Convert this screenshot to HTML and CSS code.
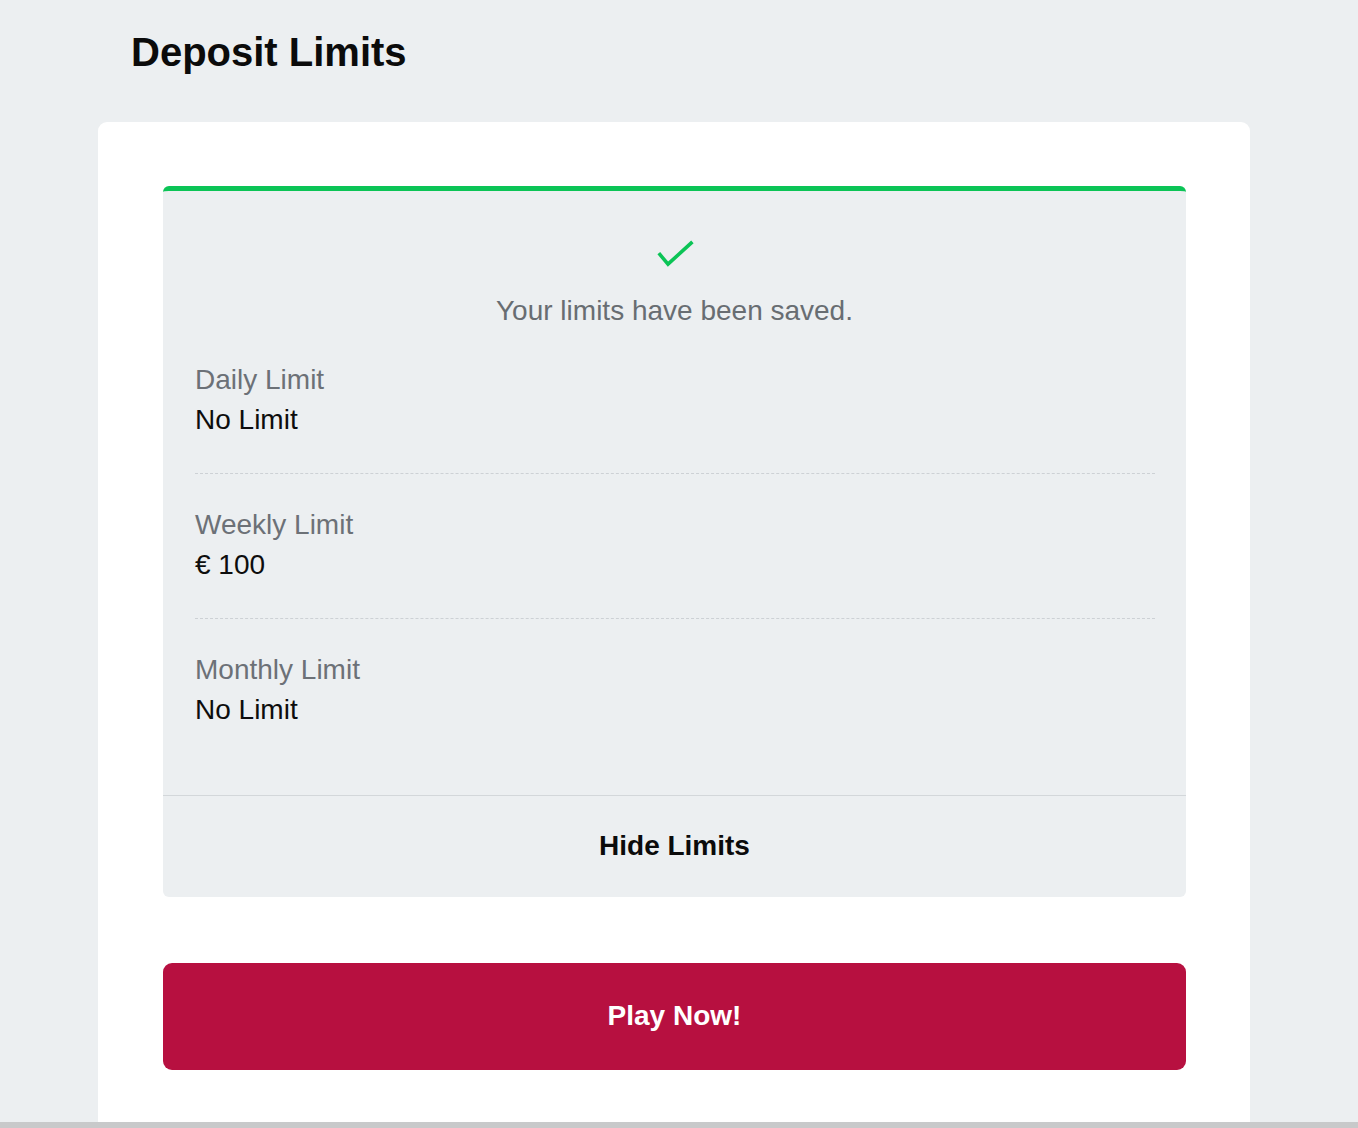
FILE: index.html
```html
<!DOCTYPE html>
<html lang="en">
<head>
<meta charset="utf-8">
<title>Deposit Limits</title>
<link rel="stylesheet" href="styles.css">
</head>
<body>
<div class="page">
  <h1 class="title">Deposit Limits</h1>
  <div class="card">
    <div class="panel">
      <div class="status">
        <svg class="check" width="37" height="28" viewBox="0 0 37 28" aria-hidden="true">
          <polyline points="1.8,13.2 11,24.2 35.4,1.8" fill="none" stroke="#0bc456" stroke-width="3.6" stroke-linecap="butt" stroke-linejoin="miter"/>
        </svg>
        <p class="status-text">Your limits have been saved.</p>
      </div>
      <div class="rows">
        <div class="row">
          <div class="label">Daily Limit</div>
          <div class="value">No Limit</div>
        </div>
        <div class="row">
          <div class="label">Weekly Limit</div>
          <div class="value">€ 100</div>
        </div>
        <div class="row last">
          <div class="label">Monthly Limit</div>
          <div class="value">No Limit</div>
        </div>
      </div>
      <div class="toggle">Hide Limits</div>
    </div>
    <div class="play">Play Now!</div>
  </div>
</div>
<div class="strip"></div>
</body>
</html>
```
FILE: styles.css
```css
html, body {
  margin: 0;
  padding: 0;
}
body {
  background: #eceff1;
  font-family: "Liberation Sans", Arial, sans-serif;
  color: #111;
  overflow: hidden;
}
.page {
  width: 1152px;
  margin-left: 98px;
}
.title {
  margin: 0;
  padding: 29px 0 47px 33px;
  font-size: 40px;
  line-height: 46px;
  font-weight: 700;
  color: #0b0b0b;
}
.card {
  box-sizing: border-box;
  height: 1000px;
  background: #ffffff;
  border-radius: 9px 9px 0 0;
  padding: 64px 64px 52px 65px;
}
.panel {
  background: #eceff1;
  border-top: 5px solid #0bc456;
  border-radius: 6px;
}
.status {
  padding-top: 49px;
  display: flex;
  flex-direction: column;
  align-items: center;
}
.check {
  display: block;
  margin-left: 1px;
}
.status-text {
  margin: 23px 0 0;
  font-size: 28px;
  line-height: 40px;
  color: #686d72;
}
.rows {
  padding: 0 31px 0 32px;
}
.row {
  padding: 29px 0 33px;
  border-bottom: 1px dashed #cdd1d5;
}
.row + .row {
  padding-top: 31px;
}
.row.last {
  border-bottom: none;
  padding-bottom: 65px;
}
.label {
  font-size: 28px;
  line-height: 40px;
  color: #6c7177;
}
.value {
  font-size: 28px;
  line-height: 40px;
  color: #0d0d0d;
}
.toggle {
  border-top: 1px solid #d3d7da;
  padding: 30px 0 31px;
  text-align: center;
  font-size: 28px;
  line-height: 40px;
  font-weight: 700;
  color: #0b0b0b;
}
.play {
  margin-top: 66px;
  height: 107px;
  border-radius: 9px;
  background: #b71040;
  color: #ffffff;
  font-size: 28px;
  line-height: 40px;
  font-weight: 700;
  display: flex;
  align-items: center;
  justify-content: center;
  padding-bottom: 2px;
  box-sizing: border-box;
}
.strip {
  height: 6px;
  background: #c8c9ca;
}
```
